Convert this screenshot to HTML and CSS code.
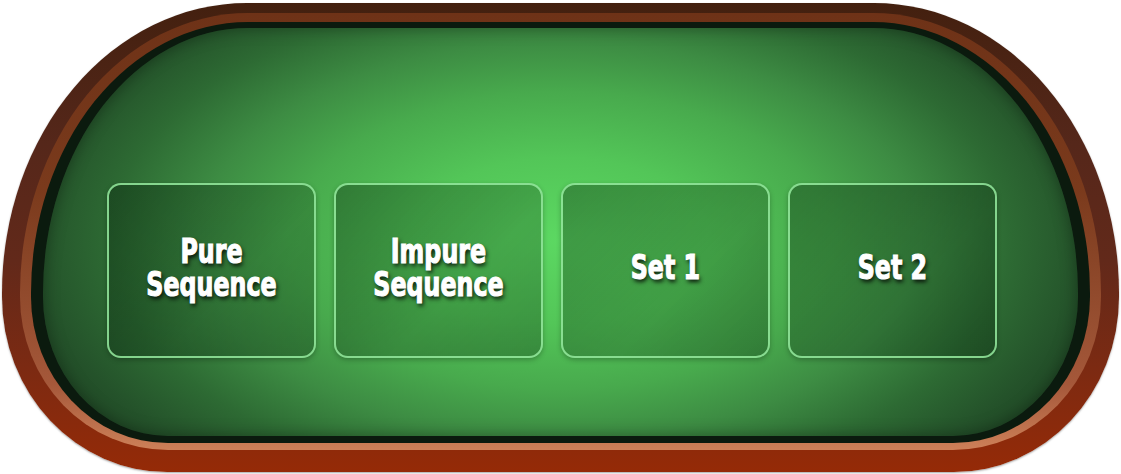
FILE: index.html
```html
<!DOCTYPE html>
<html lang="en">
<head>
<meta charset="utf-8">
<title>Rummy Table</title>
<link rel="stylesheet" href="styles.css">
</head>
<body>
<div class="table">
  <div class="lip">
    <div class="edge">
      <div class="felt">
        <div class="slots">
          <div class="slot"><div class="label"><span class="line">Pure</span><span class="line">Sequence</span></div></div>
          <div class="slot"><div class="label"><span class="line">Impure</span><span class="line">Sequence</span></div></div>
          <div class="slot"><div class="label"><span class="line">Set 1</span></div></div>
          <div class="slot"><div class="label"><span class="line">Set 2</span></div></div>
        </div>
      </div>
    </div>
  </div>
</div>
</body>
</html>
```

FILE: styles.css
```css
html, body {
  margin: 0;
  padding: 0;
  background: #ffffff;
}

body {
  padding: 3px 2px 2px 2px;
}

.table {
  box-sizing: border-box;
  width: 1117px;
  height: 469px;
  padding: 10px 18px 22px 18px;
  border-radius: 245px 245px 165px 165px / 290px 290px 175px 175px;
  background: linear-gradient(to bottom, #43200f 0%, #55271a 30%, #62291a 55%, #7c2a12 78%, #952a07 100%);
  box-shadow: 0 1px 2px rgba(0,0,0,0.35);
}

.lip {
  box-sizing: border-box;
  height: 100%;
  padding: 9px 11px 7px 11px;
  border-radius: 228px 228px 148px 148px / 280px 280px 153px 153px;
  background: linear-gradient(to bottom, #6e3217 0%, #7a3a1c 40%, #a5583a 85%, #cd8058 100%);
}

.edge {
  box-sizing: border-box;
  height: 100%;
  padding: 6px 12px 7px 12px;
  border-radius: 217px 217px 137px 137px / 271px 271px 146px 146px;
  background: #0b1a0e;
}

.felt {
  box-sizing: border-box;
  height: 100%;
  padding: 155px 0 0 64px;
  border-radius: 205px 205px 125px 125px / 265px 265px 139px 139px;
  background: radial-gradient(ellipse 600px 330px at 50% 52%, #5cd862 0%, #53c658 25%, #48aa4d 45%, #3d8c43 60%, #2d6a33 75%, #24522a 88%, #1e4323 100%);
  box-shadow: inset 0 0 16px rgba(0,0,0,0.35);
}

.slots {
  display: flex;
  gap: 18px;
}

.slot {
  box-sizing: border-box;
  width: 209px;
  height: 175px;
  display: flex;
  align-items: center;
  justify-content: center;
  padding-bottom: 6px;
  border: 2px solid rgba(150, 236, 160, 0.85);
  border-radius: 14px;
  background: linear-gradient(135deg, rgba(0,20,5,0.34) 0%, rgba(0,20,5,0.22) 60%, rgba(0,20,5,0.28) 100%);
  box-shadow: 0 2px 5px rgba(0,0,0,0.25);
}

.label {
  display: flex;
  flex-direction: column;
  align-items: center;
  transform: scaleX(0.8);
}

.line {
  display: block;
  height: 33px;
  font-family: "DejaVu Sans Condensed", "DejaVu Sans", sans-serif;
  font-weight: bold;
  font-size: 33px;
  line-height: 33px;
  color: #ffffff;
  white-space: nowrap;
  -webkit-text-stroke: 1.1px #ffffff;
  text-shadow: 2px 3px 5px rgba(0,0,0,0.85);
}
```
